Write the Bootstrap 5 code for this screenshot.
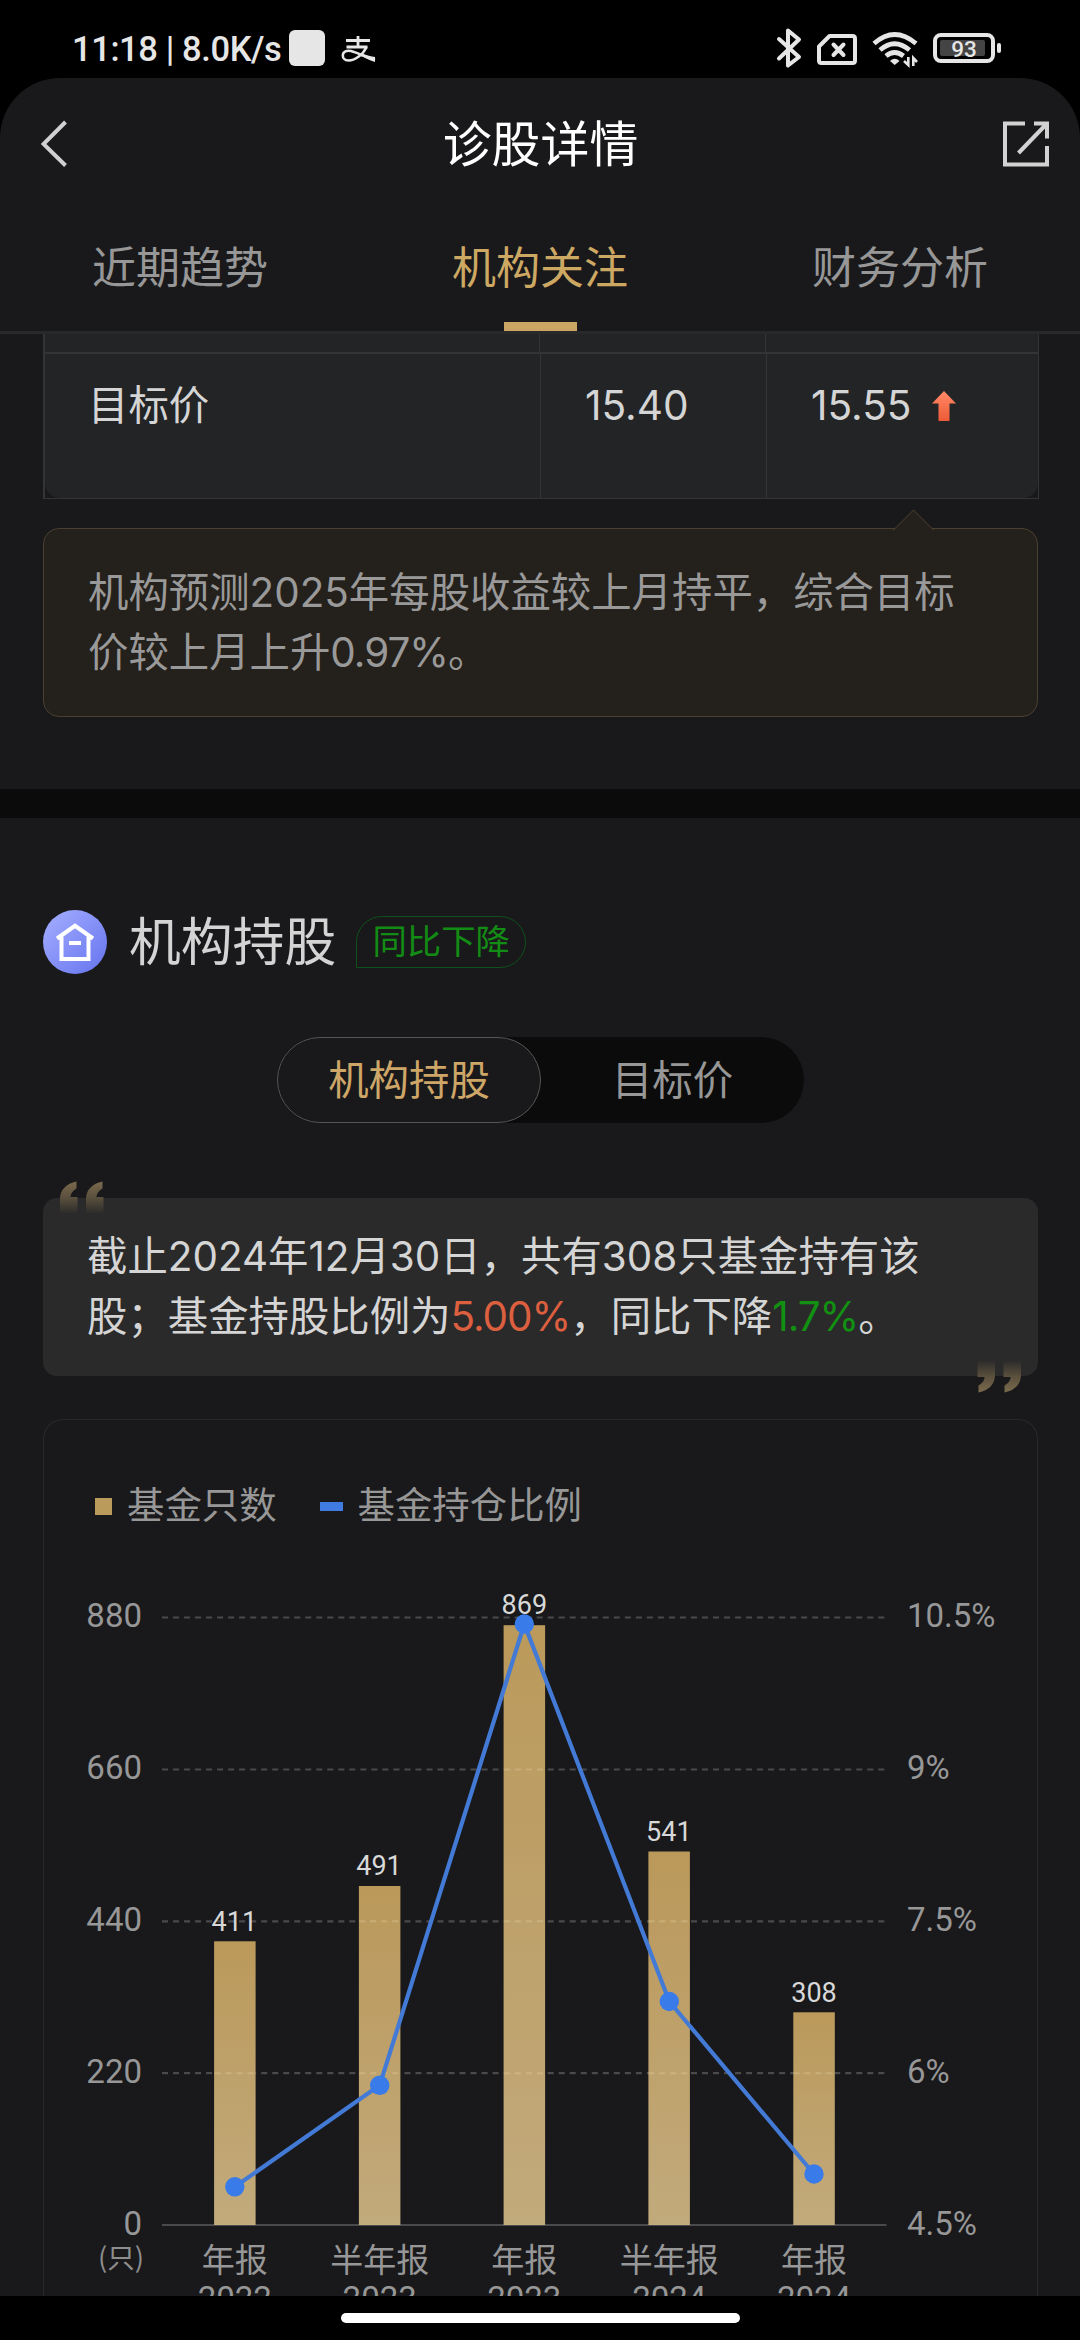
<!DOCTYPE html>
<html lang="zh-CN" data-bs-theme="dark">
<head>
<meta charset="utf-8">
<meta name="viewport" content="width=device-width, initial-scale=1">
<title>诊股详情</title>
<link href="https://cdn.jsdelivr.net/npm/bootstrap@5.3.0/dist/css/bootstrap.min.css" rel="stylesheet">
<style>
  html, body { height: 100%; }
  body { background: #000; color: #d5d5d5; font-family: Inter, "Noto Sans CJK SC", sans-serif; overflow: hidden; }
  svg { display: block; flex: none; }
  .screen { width: 1080px; height: 2340px; }
  .status-bar { height: 78px; padding: 0 77px 0 72px; color: #e6e6e6; }
  .status-text { font: 500 34.5px/40px Roboto, sans-serif; letter-spacing: -.4px; margin-top: 29px; white-space: pre; width: 217px; }
  .app-sheet { background: #19191b; border-radius: 60px 60px 0 0; }
  .title-bar { height: 132px; padding: 0 31px 0 41px; }
  .title-bar h1 { font-size: 48.9px; line-height: 60px; font-weight: 400; color: #fff; padding: 2px 0 0 9px; }
  .main-tabs { height: 124px; border-bottom: 3px solid #28292b; }
  .main-tabs .nav-link { color: #979797; font-size: 44px; line-height: 60px; height: 121px; padding: 28px 0 0; border-radius: 0; background: none !important; }
  .main-tabs .nav-link.active { color: #cda863; }
  .tab-mark { width: 73px; height: 9px; background: #cba564; }
  .page-pad { padding: 0 42px 0 43px; }
  .forecast { height: 165px; margin-right: -1px; border: 1px solid #323436; border-top: 0; border-left-width: 2px; font-size: 40.4px; line-height: 60px; }
  .forecast-fill { background: #232426; border-radius: 0 0 15px 15px; }
  .prev-row { height: 20px; border-bottom: 2px solid #323436; margin-right: -1px; margin-left: -1px; }
  .cell { padding: 22px 0 0 44px; }
  .cell + .cell, .prev-cell + .prev-cell { border-left: 1px solid #323436; }
  .c-name { width: 495px; padding-left: 43px; } .c-old { width: 226px; }
  .num { font-size: 40.6px; }
  .up-arrow { margin: 15px 0 0 20px; }
  .tip-box { margin-top: 29px; height: 189px; padding: 34px 44px; background: #24201b; border: 1px solid #4a4030; border-radius: 16px; color: #999; font-size: 40.4px; line-height: 60px; }
  .tip-notch { top: -20px; left: 848px; }
  .pct { letter-spacing: -1px; }
  .band { height: 29px; margin-top: 72px; background: #0b0b0b; }
  .sec-head { margin-top: 92px; height: 64px; }
  .sec-head h2 { font-size: 51.8px; line-height: 64px; font-weight: 400; margin-left: 22px; color: #d4d4d4; }
  .trend-tag { margin: 0 0 1px 20px; width: 170px; height: 52px; border: 1px solid #10501a; border-radius: 26px 26px 26px 0; color: #128c14; font-size: 34.4px; }
  .seg { width: 527px; height: 86px; margin-top: 63px; background: #0b0b0b; border-radius: 43px; font-size: 40.4px; color: #979797; }
  .seg > div { padding-top: 2px; }
  .seg .seg-on { width: 264px; background: #19191b; border: 1px solid #555; color: #cda668; border-radius: 43px; }
  .quote-box { margin-top: 75px; height: 178px; padding: 29px 44px; background: #2a2a2a; border-radius: 14px; color: #d5d5d5; font-size: 40.4px; line-height: 60px; }
  .q-open { left: 17px; top: -17px; }
  .q-close { right: 17px; bottom: -17px; }
  .t-red { color: #dc5f40; } .t-green { color: #129012; }
  .chart-card { margin-top: 43px; height: 877px; border: 1px solid #29292b; border-bottom: 0; border-radius: 20px 20px 0 0; }
  .legend { padding-left: 51px; height: 60px; margin-top: 56px; font-size: 37.4px; line-height: 60px; color: #979797; }
  .key-bar { width: 17px; height: 17px; background: #bb9b5c; margin-right: 15px; }
  .key-line { width: 23px; height: 9px; background: #3f7be0; margin: 0 15px 0 43px; }
  .axis-text { font: 33px Roboto, "Noto Sans CJK SC", sans-serif; fill: #979797; }
  .bar-text { font: 27px Roboto, sans-serif; fill: #d8d8d8; }
  .unit-text { font: 400 27.5px "Noto Sans CJK SC", sans-serif; fill: #8d8d8d; }
  .home-area { height: 44px; background: #000; padding-top: 17px; }
  .home-pill { width: 399px; height: 10px; border-radius: 5px; background: #fff; }
</style>
</head>
<body>
<div class="screen d-flex flex-column overflow-hidden">
  <header class="status-bar d-flex justify-content-between align-items-start">
    <div class="d-flex align-items-start">
      <div class="status-text">11:18 | 8.0K/s</div>
      <svg width="90" height="78" viewBox="289 0 90 78">
        <rect x="289" y="30" width="36" height="36" rx="6" fill="#e6e6e6"/>
        <g fill="none" stroke="#e6e6e6" stroke-width="2.8">
          <path d="M346 40.5H370M358 36V46.500M346.500 47H367.500"/>
          <path d="M366.500 47C363 55 354.500 60.500 348.500 60.500C344 60.500 342.800 57.500 342.800 55.500C342.800 51.500 347 50 351 51C359 53 366 57.500 375 60" stroke-width="2.500"/>
        </g>
        <path d="M362 53.500C367 55.500 371 56.500 375 57V62C369 60 364 57.500 360.500 55.500Z" fill="#e6e6e6"/>
      </svg>
    </div>
    <svg width="228" height="78" viewBox="774 0 228 78" fill="none" stroke="#e6e6e6">
      <path d="M778 39L798 57L787 65.500V30.500L798 39.500L778 58.500" stroke-width="4" stroke-linecap="round" stroke-linejoin="round"/>
      <path d="M828.500 36H851.500Q854 36 854 38.500V60.500Q854 63 851.500 63H820.500Q818 63 818 60.500V46.500Z" stroke-width="4" stroke-linejoin="round"/>
      <path d="M832.500 44.500L842.500 55M842.500 44.500L832.500 55" stroke-width="4" stroke-linecap="round"/>
      <path d="M873 43.500Q893.500 25.500 915 43.500M879 50Q893.500 37.500 908.500 50M885 56Q893.500 49 902.500 56" stroke-width="4.800"/>
      <path d="M889 61Q893.700 56.500 898.500 61L893.700 65Z" fill="#e6e6e6" stroke="none"/>
      <path d="M907.300 57V65L903 61M912.300 66V58L916 62" stroke-width="2.600"/>
      <rect x="934" y="35" width="58" height="26" rx="6" stroke-width="4"/>
      <rect x="939" y="40" width="45" height="16" rx="2" fill="#444" stroke="none"/>
      <rect x="996" y="43" width="4" height="10" rx="2" fill="#e6e6e6" stroke="none"/>
      <text x="963" y="57" text-anchor="middle" font-family="Roboto" font-weight="500" font-size="22.5" fill="#e6e6e6" stroke="none">93</text>
    </svg>
  </header>

  <main class="app-sheet flex-grow-1 overflow-hidden">
    <div class="title-bar d-flex align-items-center justify-content-between">
      <svg width="28" height="50" viewBox="41 119 28 50" fill="none" stroke="#d0d0d0" stroke-width="4"><path d="M65.500 122L43.500 144L65.500 165.500"/></svg>
      <h1 class="m-0">诊股详情</h1>
      <svg width="46" height="46" viewBox="1003 120.500 46 46" fill="none" stroke="#d2d2d2" stroke-width="4"><path d="M1025 123H1005V164H1047V145.500M1034 123H1047V138M1047 123L1018.500 152.500"/></svg>
    </div>
    <nav class="main-tabs nav nav-pills nav-justified flex-nowrap">
      <a class="nav-link w-100">近期趋势</a>
      <a class="nav-link w-100 active d-flex flex-column align-items-center justify-content-between">机构关注<span class="tab-mark"></span></a>
      <a class="nav-link w-100">财务分析</a>
    </nav>

    <section class="page-pad">
      <div class="forecast">
        <div class="forecast-fill h-100 d-flex flex-column">
          <div class="prev-row d-flex"><div class="prev-cell c-name"></div><div class="prev-cell c-old"></div><div class="prev-cell flex-fill"></div></div>
          <div class="d-flex flex-grow-1">
            <div class="cell c-name">目标价</div>
            <div class="cell c-old num">15.40</div>
            <div class="cell flex-fill num d-flex align-items-start">15.55
              <svg class="up-arrow" width="24" height="30" viewBox="0 0 24 30"><defs><linearGradient id="up" x2="0" y2="1"><stop stop-color="#ff8a68"/><stop offset="1" stop-color="#ee5a37"/></linearGradient></defs><path d="M12 0L24 12.500H17.500V30H6.500V12.500H0Z" fill="url(#up)"/></svg>
            </div>
          </div>
        </div>
      </div>
      <div class="tip-box position-relative">
        <svg class="tip-notch position-absolute" width="44" height="22" viewBox="0 0 44 22"><path d="M1 21.500L21.500 1L42 21.500" fill="#24201b" stroke="#4a4030"/></svg>
        机构预测2025年每股收益较上月持平，综合目标<br>价较上月上升<span class="pct">0.97%</span>。
      </div>
    </section>
    <div class="band"></div>

    <section class="page-pad">
      <div class="sec-head d-flex align-items-center">
        <svg width="64" height="64" viewBox="0 0 64 64"><defs><linearGradient id="ic" x2="1" y2="1"><stop offset=".1" stop-color="#9fa9ff"/><stop offset=".9" stop-color="#6c79ef"/></linearGradient></defs><circle cx="32" cy="32" r="32" fill="url(#ic)"/><path d="M14 28.500L32 15.800L50 28.500M18.500 27V49H45.500V27" fill="none" stroke="#fff" stroke-width="4"/><path d="M26 33H38" stroke="#fff" stroke-width="4"/></svg>
        <h2 class="mb-0">机构持股</h2>
        <span class="trend-tag d-flex align-items-center justify-content-center">同比下降</span>
      </div>
      <div class="seg d-flex mx-auto">
        <div class="seg-on d-flex align-items-center justify-content-center">机构持股</div>
        <div class="flex-fill d-flex align-items-center justify-content-center">目标价</div>
      </div>
      <div class="quote-box position-relative">
        <svg class="q-open position-absolute" width="44" height="34" viewBox="0 0 44 34"><defs><linearGradient id="qg" gradientUnits="userSpaceOnUse" x1="0" y1="0" x2="0" y2="33"><stop stop-color="#7b6b4e"/><stop offset=".5" stop-color="#5b503d"/><stop offset="1" stop-color="#2a2a2a"/></linearGradient></defs><path id="qm" d="M16.500 0.500V7.500Q11 10.500 10.300 16H17.500V33H0V17Q1 4 16.500 .5ZM42.500 .5V7.500Q37 10.500 36.300 16H43.500V33H26V17Q27 4 42.500 .5Z" fill="url(#qg)"/></svg>
        截止2024年12月30日，共有308只基金持有该<br>股；基金持股比例为<span class="t-red pct">5.00%</span>，同比下降<span class="t-green pct">1.7%</span>。
        <svg class="q-close position-absolute" width="44" height="34" viewBox="0 0 44 34"><use href="#qm" transform="rotate(180 22 17)"/></svg>
      </div>

      <div class="chart-card">
        <div class="legend d-flex align-items-center"><i class="key-bar"></i>基金只数<i class="key-line"></i>基金持仓比例</div>
        <svg width="993" height="770" viewBox="44 1536 993 770">
          <defs><linearGradient id="bar" x2="0" y2="1"><stop stop-color="#c3a05e"/><stop offset="1" stop-color="#cbb281"/></linearGradient></defs>
          <path d="M162 1617.500H885M162 1769.500H885M162 1921.300H885M162 2073.200H885" stroke="#4a4a4c" stroke-width="2.200" stroke-dasharray="6 5.020"/>
          <path d="M162 2225H886.500" stroke="#4a4a4c" stroke-width="2"/>
          <g fill="url(#bar)" opacity=".95">
            <rect x="214.100" y="1941.300" width="41.500" height="283.700"/>
            <rect x="358.900" y="1886" width="41.500" height="339"/>
            <rect x="503.600" y="1625.200" width="41.500" height="599.800"/>
            <rect x="648.400" y="1851.500" width="41.500" height="373.500"/>
            <rect x="793.300" y="2012.300" width="41.500" height="212.700"/>
          </g>
          <path d="M359 1921.300H400M504 1769.500H545M504 1921.300H545M648.500 1921.300H690M214.500 2073.200H255M359 2073.200H400M504 2073.200H545M648.500 2073.200H690M793.500 2073.200H834.500" stroke="#d8c190" stroke-opacity=".45" stroke-width="2" stroke-dasharray="6 5"/>
          <path d="M234.800 2186.800L379.700 2085.300L524.300 1624L669.300 2001.500L814 2174" fill="none" stroke="#427ad6" stroke-width="4.200"/>
          <g fill="#3a7bea"><circle cx="234.800" cy="2186.800" r="9.700"/><circle cx="379.700" cy="2085.300" r="9.700"/><circle cx="524.300" cy="1624" r="9.700"/><circle cx="669.300" cy="2001.500" r="9.700"/><circle cx="814" cy="2174" r="9.700"/></g>
          <g class="bar-text" text-anchor="middle"><text x="234.300" y="1930.500">411</text><text x="379" y="1874.500">491</text><text x="524.300" y="1613.500">869</text><text x="668.800" y="1840.500">541</text><text x="814" y="2001.500">308</text></g>
          <g class="axis-text" text-anchor="end"><text x="142" y="1627">880</text><text x="142" y="1779">660</text><text x="142" y="1930.500">440</text><text x="142" y="2082.500">220</text><text x="142" y="2234.500">0</text></g>
          <g class="axis-text"><text x="907" y="1627">10.5%</text><text x="907" y="1779">9%</text><text x="907" y="1930.500">7.5%</text><text x="907" y="2082.500">6%</text><text x="907" y="2234.500">4.5%</text></g>
          <text class="unit-text" x="121" y="2267.500" text-anchor="middle">(只)</text>
          <g class="axis-text" text-anchor="middle">
            <text x="234.800" y="2272">年报</text><text x="379.700" y="2272">半年报</text><text x="524.300" y="2272">年报</text><text x="669.300" y="2272">半年报</text><text x="814" y="2272">年报</text>
            <text x="234.800" y="2310">2022</text><text x="379.700" y="2310">2023</text><text x="524.300" y="2310">2023</text><text x="669.300" y="2310">2024</text><text x="814" y="2310">2024</text>
          </g>
        </svg>
      </div>
    </section>
  </main>
  <footer class="home-area"><div class="home-pill mx-auto"></div></footer>
</div>
<script src="https://cdn.jsdelivr.net/npm/bootstrap@5.3.0/dist/js/bootstrap.bundle.min.js"></script>
</body>
</html>
